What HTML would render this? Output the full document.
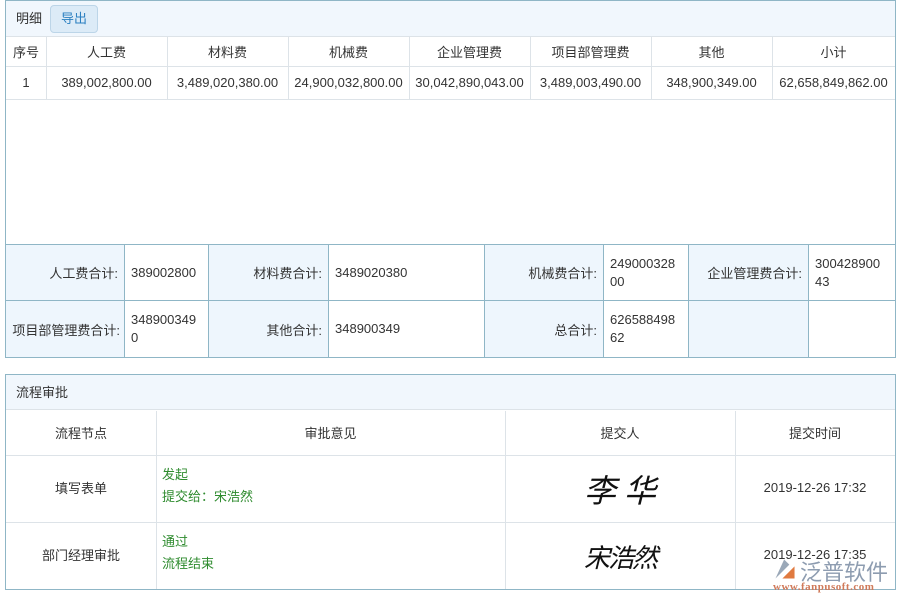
<!DOCTYPE html>
<html><head><meta charset="utf-8"><style>
*{margin:0;padding:0;box-sizing:border-box}
body{width:900px;height:600px;background:#fff;position:relative;overflow:hidden;font-family:"Liberation Sans","Noto Sans CJK SC",sans-serif;font-size:13px;color:#333}
.a{position:absolute}
.c{position:absolute;display:flex;align-items:center;justify-content:center;text-align:center}
.bl{border-left:1px solid #dde3e8}
.lab{position:absolute;background:#eef6fd;display:flex;align-items:center;justify-content:flex-end;padding-right:6px}
.val{position:absolute;background:#fff;display:flex;align-items:center;padding-left:6px;padding-right:8px;line-height:18px;word-break:break-all}
.g{color:#2e8b2e;line-height:22px}
</style></head><body>
<div class="a" style="left:5px;top:0;width:891px;height:358px;border:1px solid #8fb6c6;background:#fff"></div>
<div class="a" style="left:6px;top:1px;width:889px;height:36px;background:#f1f7fd;border-bottom:1px solid #dde3e8"></div>
<div class="a" style="left:16px;top:8px">明细</div>
<div class="c" style="left:50px;top:5px;width:48px;height:28px;background:#dcebf7;border:1px solid #bcd5e8;border-radius:4px;color:#2a7fc0;padding-bottom:3px">导出</div>
<div class="a" style="left:6px;top:66px;width:889px;height:1px;background:#dde3e8"></div>
<div class="a" style="left:6px;top:99px;width:889px;height:1px;background:#dde3e8"></div>
<div class="c" style="left:6px;top:36px;width:40px;height:30px">序号</div>
<div class="c bl" style="left:46px;top:37px;width:121px;height:63px"></div>
<div class="c bl" style="left:167px;top:37px;width:121px;height:63px"></div>
<div class="c bl" style="left:288px;top:37px;width:121px;height:63px"></div>
<div class="c bl" style="left:409px;top:37px;width:121px;height:63px"></div>
<div class="c bl" style="left:530px;top:37px;width:121px;height:63px"></div>
<div class="c bl" style="left:651px;top:37px;width:121px;height:63px"></div>
<div class="c bl" style="left:772px;top:37px;width:123px;height:63px"></div>
<div class="c" style="left:46px;top:36px;width:121px;height:30px">人工费</div>
<div class="c" style="left:167px;top:36px;width:121px;height:30px">材料费</div>
<div class="c" style="left:288px;top:36px;width:121px;height:30px">机械费</div>
<div class="c" style="left:409px;top:36px;width:121px;height:30px">企业管理费</div>
<div class="c" style="left:530px;top:36px;width:121px;height:30px">项目部管理费</div>
<div class="c" style="left:651px;top:36px;width:121px;height:30px">其他</div>
<div class="c" style="left:772px;top:36px;width:123px;height:30px">小计</div>
<div class="c" style="left:6px;top:66px;width:40px;height:32px">1</div>
<div class="c" style="left:46px;top:66px;width:121px;height:32px">389,002,800.00</div>
<div class="c" style="left:167px;top:66px;width:121px;height:32px">3,489,020,380.00</div>
<div class="c" style="left:288px;top:66px;width:121px;height:32px">24,900,032,800.00</div>
<div class="c" style="left:409px;top:66px;width:121px;height:32px">30,042,890,043.00</div>
<div class="c" style="left:530px;top:66px;width:121px;height:32px">3,489,003,490.00</div>
<div class="c" style="left:651px;top:66px;width:121px;height:32px">348,900,349.00</div>
<div class="c" style="left:772px;top:66px;width:123px;height:32px">62,658,849,862.00</div>
<div class="a" style="left:5px;top:244px;width:891px;height:114px;background:#8fb6c6"></div>
<div class="lab" style="left:6px;top:245px;width:118px;height:55px">人工费合计:</div>
<div class="val" style="left:125px;top:245px;width:83px;height:55px">389002800</div>
<div class="lab" style="left:209px;top:245px;width:119px;height:55px">材料费合计:</div>
<div class="val" style="left:329px;top:245px;width:155px;height:55px">3489020380</div>
<div class="lab" style="left:485px;top:245px;width:118px;height:55px">机械费合计:</div>
<div class="val" style="left:604px;top:245px;width:84px;height:55px">24900032800</div>
<div class="lab" style="left:689px;top:245px;width:119px;height:55px">企业管理费合计:</div>
<div class="val" style="left:809px;top:245px;width:86px;height:55px;padding-right:10px">30042890043</div>
<div class="lab" style="left:6px;top:301px;width:118px;height:56px;padding-right:4px">项目部管理费合计:</div>
<div class="val" style="left:125px;top:301px;width:83px;height:56px">3489003490</div>
<div class="lab" style="left:209px;top:301px;width:119px;height:56px">其他合计:</div>
<div class="val" style="left:329px;top:301px;width:155px;height:56px">348900349</div>
<div class="lab" style="left:485px;top:301px;width:118px;height:56px">总合计:</div>
<div class="val" style="left:604px;top:301px;width:84px;height:56px">62658849862</div>
<div class="lab" style="left:689px;top:301px;width:119px;height:56px"></div>
<div class="val" style="left:809px;top:301px;width:86px;height:56px"></div>
<div class="a" style="left:5px;top:374px;width:891px;height:216px;border:1px solid #8fb6c6;background:#fff"></div>
<div class="a" style="left:6px;top:375px;width:889px;height:35px;background:#f1f7fd;border-bottom:1px solid #dde3e8"></div>
<div class="a" style="left:16px;top:382px">流程审批</div>
<div class="a" style="left:6px;top:455px;width:889px;height:1px;background:#dde3e8"></div>
<div class="a" style="left:6px;top:522px;width:889px;height:1px;background:#dde3e8"></div>
<div class="a" style="left:156px;top:411px;width:1px;height:178px;background:#dde3e8"></div>
<div class="a" style="left:505px;top:411px;width:1px;height:178px;background:#dde3e8"></div>
<div class="a" style="left:735px;top:411px;width:1px;height:178px;background:#dde3e8"></div>
<div class="c" style="left:6px;top:410px;width:150px;height:44px">流程节点</div>
<div class="c" style="left:156px;top:410px;width:349px;height:44px">审批意见</div>
<div class="c" style="left:505px;top:410px;width:230px;height:44px">提交人</div>
<div class="c" style="left:735px;top:410px;width:160px;height:44px">提交时间</div>
<div class="c" style="left:6px;top:454px;width:150px;height:66px">填写表单</div>
<div class="a g" style="left:162px;top:464px">发起<br>提交给：宋浩然</div>
<div class="c" style="left:505px;top:456px;width:230px;height:66px;font-family:'Liberation Serif',serif;font-size:32px;font-style:italic;color:#111">李 华</div>
<div class="c" style="left:735px;top:454px;width:160px;height:66px">2019-12-26 17:32</div>
<div class="c" style="left:6px;top:521px;width:150px;height:66px">部门经理审批</div>
<div class="a g" style="left:162px;top:531px">通过<br>流程结束</div>
<div class="c" style="left:505px;top:523px;width:230px;height:66px;font-size:26px;font-style:italic;color:#111;letter-spacing:-2px">宋浩然</div>
<div class="c" style="left:735px;top:521px;width:160px;height:66px">2019-12-26 17:35</div>
<svg class="a" style="left:772px;top:556px" width="26" height="26" viewBox="0 0 30 30"><path d="M4 26 L14 4 L20 10 Z" fill="#9aa8b8"/><path d="M12 26 L26 12 L26 26 Z" fill="#e07a40"/></svg>
<div class="a" style="left:800px;top:555px;font-size:22px;color:#8d9cb0">泛普软件</div>
<div class="a" style="left:773px;top:581px;font-size:11px;font-family:'Liberation Serif',serif;color:#d07a5a;font-weight:bold;letter-spacing:0.5px">www.fanpusoft.com</div>
</body></html>
